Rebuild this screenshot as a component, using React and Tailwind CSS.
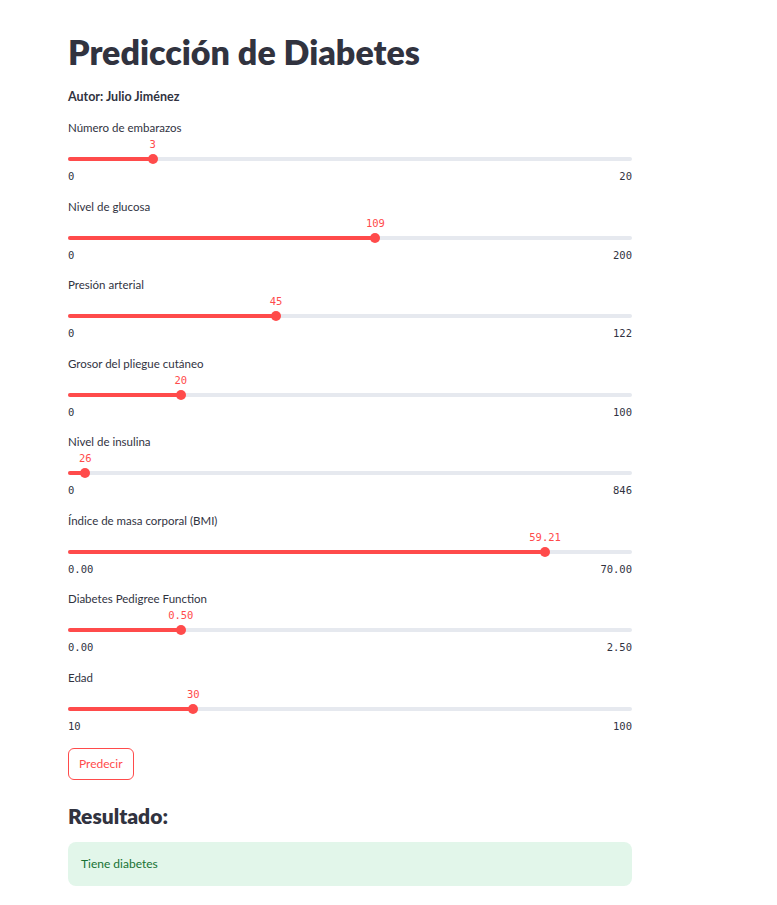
import React from "react";

const sliders = [
  { label: "Número de embarazos", min: 0, max: 20, value: 3, fmt: (v) => String(v) },
  { label: "Nivel de glucosa", min: 0, max: 200, value: 109, fmt: (v) => String(v) },
  { label: "Presión arterial", min: 0, max: 122, value: 45, fmt: (v) => String(v) },
  { label: "Grosor del pliegue cutáneo", min: 0, max: 100, value: 20, fmt: (v) => String(v) },
  { label: "Nivel de insulina", min: 0, max: 846, value: 26, fmt: (v) => String(v) },
  { label: "Índice de masa corporal (BMI)", min: 0, max: 70, value: 59.21, fmt: (v) => v.toFixed(2) },
  { label: "Diabetes Pedigree Function", min: 0, max: 2.5, value: 0.5, fmt: (v) => v.toFixed(2) },
  { label: "Edad", min: 10, max: 100, value: 30, fmt: (v) => String(v) },
];

function Slider({ label, min, max, value, fmt }) {
  const pct = ((value - min) / (max - min)) * 100;
  return (
    <div className="flex flex-col">
      <div className="h-4 text-[11.5px] leading-4 text-[#31333f]">{label}</div>
      <div className="relative mt-[2px] h-[14px]">
        <span
          className="absolute top-0 -translate-x-1/2 font-['DejaVu_Sans_Mono',monospace] text-[10.5px] leading-[13px] text-[#ff4b4b]"
          style={{ left: `${pct}%` }}
        >
          {fmt(value)}
        </span>
      </div>
      <div className="relative h-[14px]">
        <div className="absolute left-0 right-0 top-[5px] h-1 rounded-full bg-[#e6e9ef]" />
        <div className="absolute left-0 top-[5px] h-1 rounded-full bg-[#ff4b4b]" style={{ width: `${pct}%` }} />
        <div
          className="absolute top-[2px] h-[10px] w-[10px] -translate-x-1/2 rounded-full bg-[#ff4b4b]"
          style={{ left: `${pct}%` }}
        />
      </div>
      <div className="mt-[3px] flex h-[14px] justify-between font-['DejaVu_Sans_Mono',monospace] text-[10.5px] leading-[14px] text-[#31333f]">
        <span>{fmt(min)}</span>
        <span>{fmt(max)}</span>
      </div>
    </div>
  );
}

export default function App() {
  return (
    <div className="min-h-[905px] bg-white font-['Lato','Noto_Sans',sans-serif] text-[#31333f]">
      <div className="ml-[68px] w-[564px] pt-[30px]">
        <h1 className="h-[44px] text-[34px] font-extrabold leading-[44px] text-[#31333f]">Predicción de Diabetes</h1>
        <p className="mt-[15px] text-[12.5px] font-bold leading-4">Autor: Julio Jiménez</p>
        <div className="mt-[15px] flex flex-col gap-[15.57px]">
          {sliders.map((s) => (
            <Slider key={s.label} {...s} />
          ))}
        </div>
        <button className="mt-[15px] h-8 rounded-md border border-[#ff4b4b] px-[10px] text-[12px] text-[#ff4b4b]">
          Predecir
        </button>
        <h3 className="mt-[22px] text-[21px] font-extrabold leading-7">Resultado:</h3>
        <div className="mt-[12px] flex h-[44px] items-center rounded-lg bg-[#e2f6ea] px-[13px] text-[12px] text-[#177233]">
          Tiene diabetes
        </div>
      </div>
    </div>
  );
}
